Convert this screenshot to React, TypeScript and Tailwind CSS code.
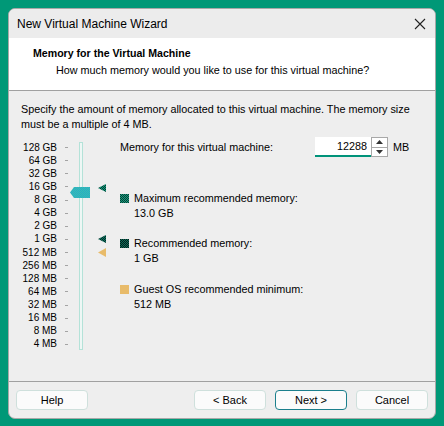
import React from 'react'

const labels = ['128 GB', '64 GB', '32 GB', '16 GB', '8 GB', '4 GB', '2 GB', '1 GB', '512 MB', '256 MB', '128 MB', '64 MB', '32 MB', '16 MB', '8 MB', '4 MB']

function Checker({ id, a, b }: { id: string; a: string; b: string }) {
  return (
    <pattern id={id} width="2" height="2" patternUnits="userSpaceOnUse">
      <rect width="2" height="2" fill={a} />
      <rect width="1" height="1" fill={b} />
      <rect x="1" y="1" width="1" height="1" fill={b} />
    </pattern>
  )
}

function Slider() {
  return (
    <div className="relative w-[90px] h-[208px] shrink-0">
      <div className="flex flex-col items-end w-[36px] -mt-[1px]">
        {labels.map((l) => (
          <div key={l} className="h-[13.13px] flex items-center justify-end whitespace-nowrap text-[10px] leading-[12px]">
            {l}
          </div>
        ))}
      </div>
      {/* ticks */}
      <div className="absolute left-[44px] -top-[1px] flex flex-col">
        {labels.map((l) => (
          <div key={l} className="h-[13.13px] flex items-center">
            <div className="w-[3px] h-px bg-[#a4a4a4]" />
          </div>
        ))}
      </div>
      {/* track */}
      <div className="absolute left-[58px] top-0 w-[4px] h-[208px] border border-[#b4e2d8] bg-[#eef7f5]" />
      {/* thumb */}
      <svg width="20" height="11" viewBox="0 0 20 11" className="absolute left-[49px] top-[45px]">
        <defs>
          <Checker id="th" a="#2aa8c8" b="#37c1b0" />
        </defs>
        <polygon points="0,5.5 4,0 20,0 20,11 4,11" fill="url(#th)" />
      </svg>
      <svg width="9" height="8" viewBox="0 0 9 8" className="absolute left-[77px] top-[42px]">
        <defs>
          <Checker id="m1" a="#0fa080" b="#063a30" />
        </defs>
        <polygon points="0,4 8,0 8,8" fill="url(#m1)" />
      </svg>
      <svg width="9" height="8" viewBox="0 0 9 8" className="absolute left-[77px] top-[93px]">
        <defs>
          <Checker id="m2" a="#0a7a66" b="#052a24" />
        </defs>
        <polygon points="0,4 8,0 8,8" fill="url(#m2)" />
      </svg>
      <svg width="9" height="9" viewBox="0 0 9 9" className="absolute left-[77px] top-[106px]">
        <polygon points="0,4.5 8,0 8,9" fill="#e8bb6a" />
      </svg>
    </div>
  )
}

function Swatch({ kind }: { kind: 'max' | 'rec' | 'min' }) {
  if (kind === 'min') return <div className="w-[9px] h-[9px] bg-[#e8bb6a] shrink-0" />
  return (
    <svg width="9" height="9" viewBox="0 0 9 9" className="shrink-0">
      <defs>
        {kind === 'max' ? <Checker id="sw1" a="#17a082" b="#0a3c32" /> : <Checker id="sw2" a="#0c6e5c" b="#051f1a" />}
      </defs>
      <rect width="9" height="9" fill={kind === 'max' ? 'url(#sw1)' : 'url(#sw2)'} />
    </svg>
  )
}

function Legend({ kind, title, value }: { kind: 'max' | 'rec' | 'min'; title: string; value: string }) {
  return (
    <div className="flex flex-col">
      <div className="flex items-center gap-[5px] h-[15px]">
        <Swatch kind={kind} />
        <span>{title}</span>
      </div>
      <div className="pl-[14px] h-[15px] flex items-center">{value}</div>
    </div>
  )
}

function Button({ label, primary }: { label: string; primary?: boolean }) {
  return (
    <button
      className={`w-[72px] h-[20px] rounded-[4px] bg-[#fbfbfb] text-[11px] leading-none border ${primary ? 'border-[#1b7f8c]' : 'border-[#cfe0dc]'}`}
    >
      {label}
    </button>
  )
}

export default function App() {
  return (
    <div className="w-[444px] h-[426px] bg-[#009877] pl-2 pt-2 font-['Liberation_Sans',Arial,sans-serif] text-[10.8px] text-black">
      <div className="w-[428px] h-[411px] rounded-[7px] bg-[#eeeeee] border border-[#a8a8a8] overflow-hidden flex flex-col">
        {/* title bar */}
        <div className="h-[29px] shrink-0 flex items-center justify-between pl-[8px] pr-[9px] bg-[#ececec]">
          <span className="text-[12px]">New Virtual Machine Wizard</span>
          <svg width="12" height="12" viewBox="0 0 12 12">
            <path d="M1 1 L11 11 M11 1 L1 11" stroke="#222" strokeWidth="1.1" />
          </svg>
        </div>
        {/* header */}
        <div className="h-[53px] shrink-0 bg-white border-b border-[#a0a0a0] pl-[24px] pt-[7px]">
          <div className="font-bold text-[10.6px] leading-[16px]">Memory for the Virtual Machine</div>
          <div className="pl-[23px] leading-[16px] mt-[1px]">How much memory would you like to use for this virtual machine?</div>
        </div>
        {/* body */}
        <div className="flex-1 flex flex-col px-[12px] pt-[11px]">
          <p className="leading-[14.5px]">
            Specify the amount of memory allocated to this virtual machine. The memory size
            <br />
            must be a multiple of 4 MB.
          </p>
          <div className="flex mt-[11px]">
            <Slider />
            <div className="flex flex-col pl-[9px] flex-1">
              <div className="flex items-center h-[20px] -mt-[5px]">
                <span className="w-[195px]">Memory for this virtual machine:</span>
                <div className="w-[56px] h-[20px] bg-white border-b-2 border-[#00937a] flex items-center justify-end pr-[4px] pt-[1px]">12288</div>
                <div className="w-[17px] h-[20px] border border-[#a8a8a8] flex flex-col bg-white">
                  <div className="flex-1 flex items-center justify-center border-b border-[#a8a8a8]">
                    <svg width="7" height="4" viewBox="0 0 7 4"><polygon points="0,4 3.5,0 7,4" fill="#333" /></svg>
                  </div>
                  <div className="flex-1 flex items-center justify-center">
                    <svg width="7" height="4" viewBox="0 0 7 4"><polygon points="0,0 3.5,4 7,0" fill="#333" /></svg>
                  </div>
                </div>
                <span className="ml-[5px]">MB</span>
              </div>
              <div className="flex flex-col gap-[15.5px] mt-[33.5px]">
                <Legend kind="max" title="Maximum recommended memory:" value="13.0 GB" />
                <Legend kind="rec" title="Recommended memory:" value="1 GB" />
                <Legend kind="min" title="Guest OS recommended minimum:" value="512 MB" />
              </div>
            </div>
          </div>
          <div className="flex-1" />
        </div>
        {/* footer */}
        <div className="h-[37px] shrink-0 border-t border-[#a0a0a0] flex items-start pt-[8px] pl-[7px] pr-[7px]">
          <Button label="Help" />
          <div className="flex-1" />
          <div className="flex gap-[9px]">
            <Button label="< Back" />
            <Button label="Next >" primary />
            <Button label="Cancel" />
          </div>
        </div>
      </div>
    </div>
  )
}
